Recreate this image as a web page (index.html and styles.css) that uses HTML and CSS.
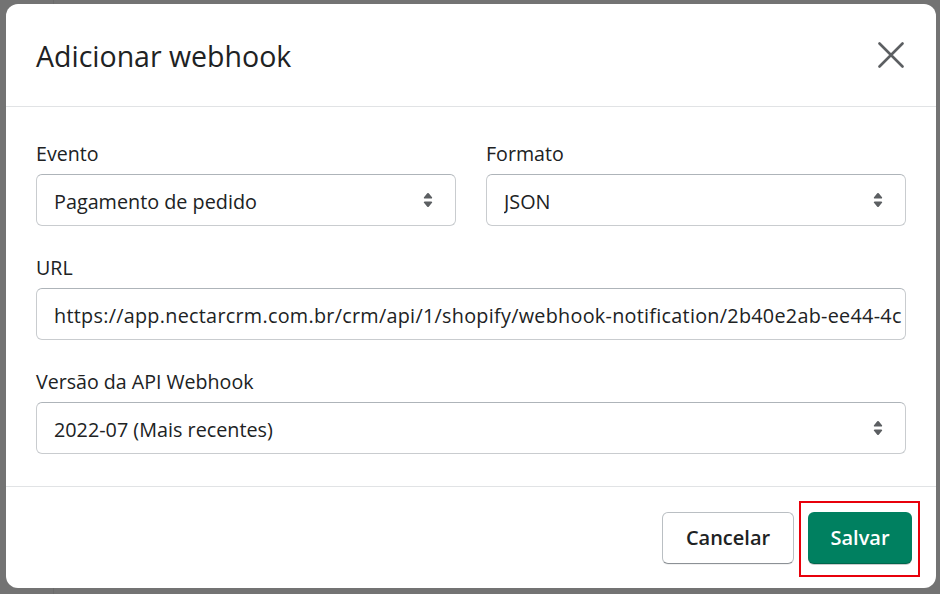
FILE: index.html
```html
<!DOCTYPE html>
<html lang="pt-BR">
<head>
<meta charset="utf-8">
<title>Adicionar webhook</title>
<link rel="stylesheet" href="styles.css">
</head>
<body>
<div class="backdrop">
  <div class="modal">
    <div class="modal-header">
      <h2 class="modal-title">Adicionar webhook</h2>
      <button class="close-btn" aria-label="Fechar">
        <svg viewBox="0 0 26 26" width="26" height="26"><path d="M1.5 1.5L24.5 24.5M24.5 1.5L1.5 24.5" stroke="#5c5f62" stroke-width="2.6" stroke-linecap="round" fill="none"/></svg>
      </button>
    </div>
    <div class="modal-body">
      <div class="row two">
        <div class="field">
          <label class="label">Evento</label>
          <div class="select">
            <span class="value">Pagamento de pedido</span>
            <svg class="caret" viewBox="0 0 20 20"><path d="M7.676 9h4.648c.563 0 .879-.603.53-1.014L10.531 5.240a.708.708 0 0 0-1.062 0L7.145 7.986C6.798 8.397 7.113 9 7.676 9zm4.648 2H7.676c-.563 0-.878.603-.53 1.014l2.323 2.746a.708.708 0 0 0 1.062 0l2.323-2.746c.349-.411.033-1.014-.53-1.014z"/></svg>
          </div>
        </div>
        <div class="field">
          <label class="label">Formato</label>
          <div class="select">
            <span class="value">JSON</span>
            <svg class="caret" viewBox="0 0 20 20"><path d="M7.676 9h4.648c.563 0 .879-.603.53-1.014L10.531 5.240a.708.708 0 0 0-1.062 0L7.145 7.986C6.798 8.397 7.113 9 7.676 9zm4.648 2H7.676c-.563 0-.878.603-.53 1.014l2.323 2.746a.708.708 0 0 0 1.062 0l2.323-2.746c.349-.411.033-1.014-.53-1.014z"/></svg>
          </div>
        </div>
      </div>
      <div class="field">
        <label class="label">URL</label>
        <div class="input">
          <span class="value url">https://app.nectarcrm.com.br/crm/api/1/shopify/webhook-notification/2b40e2ab-ee44-4c</span>
        </div>
      </div>
      <div class="field">
        <label class="label">Versão da API Webhook</label>
        <div class="select">
          <span class="value">2022-07 (Mais recentes)</span>
          <svg class="caret" viewBox="0 0 20 20"><path d="M7.676 9h4.648c.563 0 .879-.603.53-1.014L10.531 5.240a.708.708 0 0 0-1.062 0L7.145 7.986C6.798 8.397 7.113 9 7.676 9zm4.648 2H7.676c-.563 0-.878.603-.53 1.014l2.323 2.746a.708.708 0 0 0 1.062 0l2.323-2.746c.349-.411.033-1.014-.53-1.014z"/></svg>
        </div>
      </div>
    </div>
    <div class="modal-footer">
      <button class="btn btn-secondary">Cancelar</button>
      <span class="highlight">
        <button class="btn btn-primary">Salvar</button>
      </span>
    </div>
  </div>
</div>
</body>
</html>
```

FILE: styles.css
```css
* { box-sizing: border-box; }
html, body { margin: 0; padding: 0; }
body {
  width: 940px;
  height: 594px;
  overflow: hidden;
  background: #737373;
  font-family: "Open Sans", "Noto Sans", "Liberation Sans", sans-serif;
  color: #202223;
}
.backdrop {
  width: 940px;
  height: 594px;
  padding: 4px 4px 6px 6px;
  background: linear-gradient(to right, #737373 0, #737373 53px, #6b6b6b 53px, #6b6b6b 54px, #737373 54px);
}
.modal {
  width: 930px;
  height: 584px;
  background: #ffffff;
  border-radius: 12px;
  display: flex;
  flex-direction: column;
  overflow: hidden;
}
.modal-header {
  height: 103px;
  flex: none;
  display: flex;
  align-items: center;
  justify-content: space-between;
  padding: 0 32px 0 30px;
  border-bottom: 1px solid #e1e3e5;
}
.modal-title {
  margin: 0;
  font-size: 28.5px;
  font-weight: 400;
  letter-spacing: 0;
  color: #202223;
  padding-top: 2px;
}
.close-btn {
  border: 0;
  background: none;
  padding: 0;
  width: 26px;
  height: 26px;
  display: flex;
}
.modal-body {
  flex: 1;
  padding: 33px 30px 0 30px;
  display: flex;
  flex-direction: column;
  gap: 28px;
  border-bottom: 1px solid #e1e3e5;
}
.row.two {
  display: grid;
  grid-template-columns: 420px 420px;
  gap: 30px;
}
.field {
  display: flex;
  flex-direction: column;
  gap: 6px;
}
.label {
  font-size: 19.6px;
  line-height: 28px;
  color: #202223;
}
.select, .input {
  height: 52px;
  border: 1px solid #c9cccf;
  border-top-color: #aeb4b9;
  border-radius: 6px;
  display: flex;
  align-items: center;
  padding: 0 22px 0 17px;
  background: #fff;
  overflow: hidden;
}
.value {
  font-size: 19.8px;
  color: #202223;
  white-space: nowrap;
  flex: 1;
  overflow: hidden;
  padding-top: 2px;
}
.input { padding-right: 0; }
.value.url { text-overflow: clip; letter-spacing: 0.28px; }
.caret {
  width: 28px;
  height: 28px;
  flex: none;
  fill: #5c5f62;
  margin-right: -9px;
}
.modal-footer {
  height: 101px;
  flex: none;
  display: flex;
  align-items: center;
  justify-content: flex-end;
  gap: 14px;
  padding: 0 24px 0 30px;
}
.btn {
  height: 52px;
  border-radius: 6px;
  font-family: inherit;
  font-size: 20px;
  font-weight: 600;
  padding: 0 20px;
}
.btn-secondary {
  width: 132px;
  background: #fff;
  color: #202223;
  border: 1px solid #babfc3;
  border-bottom-color: #8c9196;
  box-shadow: 0 1px 0 rgba(0,0,0,0.05);
}
.btn-primary {
  width: 104px;
  background: #008060;
  color: #fff;
  border: 0;
  box-shadow: 0 1px 0 rgba(0,0,0,0.2), inset 0 -1px 0 rgba(0,0,0,0.2);
  font-weight: 600;
}
.highlight {
  position: relative;
  display: flex;
}
.highlight::after {
  content: "";
  position: absolute;
  left: -9px;
  right: -8px;
  top: -11px;
  bottom: -13px;
  border: 2px solid #e8000b;
}
```
